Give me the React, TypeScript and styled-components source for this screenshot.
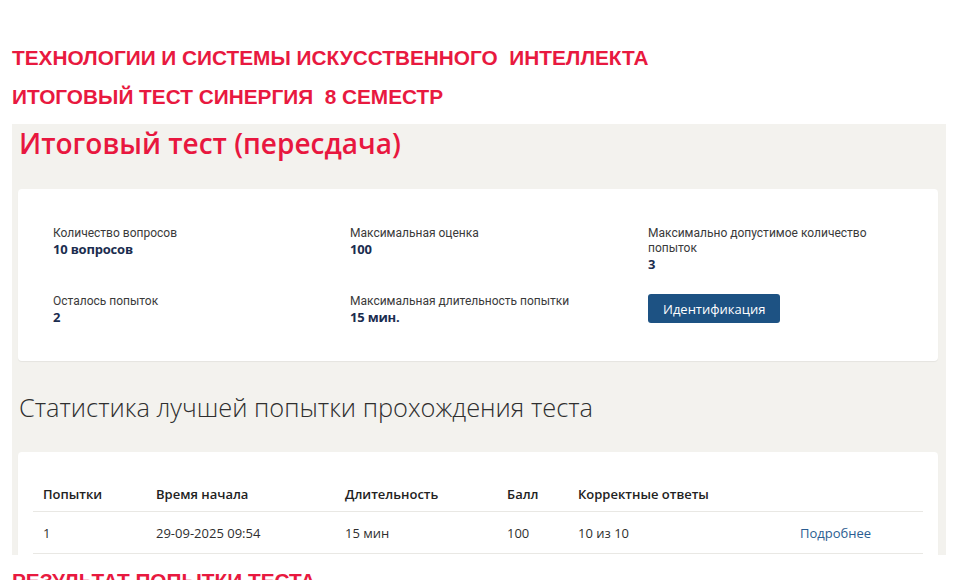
import React from "react";
import styled, { createGlobalStyle } from "styled-components";

const Global = createGlobalStyle`
  html, body {
    margin: 0;
    padding: 0;
    background: #ffffff;
    height: 580px;
    overflow: hidden;
  }
  body {
    font-family: "Open Sans", "Liberation Sans", sans-serif;
  }
`;

const Page = styled.div`
  padding-top: 38px;
  display: flex;
  flex-direction: column;
`;

const RedHeading = styled.div`
  flex-shrink: 0;
  font-family: "Liberation Sans", Arial, sans-serif;
  font-weight: 700;
  font-size: 20.8px;
  line-height: 39px;
  color: #e8193f;
  padding-left: 12px;
  white-space: pre;
`;

const Panel = styled.section`
  flex-shrink: 0;
  margin: 8px 0 6px 12px;
  width: 934px;
  height: 431px;
  box-sizing: border-box;
  background: #f3f2ee;
  padding: 0 8px 0 6px;
  overflow: hidden;
  display: flex;
  flex-direction: column;
  & > * {
    flex-shrink: 0;
  }
`;

const Title = styled.h1`
  margin: 0;
  padding: 0 0 0 1px;
  font-family: "Open Sans", sans-serif;
  font-weight: 600;
  font-size: 28px;
  line-height: 38px;
  color: #e8173f;
  height: 65px;
`;

const Card = styled.div`
  background: #ffffff;
  border-radius: 4px;
  box-shadow: 0 1px 1px rgba(0, 0, 0, 0.06);
`;

const InfoCard = styled(Card)`
  padding: 37px 20px 36px 35px;
  display: grid;
  grid-template-columns: 297px 298px 1fr;
  row-gap: 22px;
`;

const InfoItem = styled.div`
  display: flex;
  flex-direction: column;
  align-items: flex-start;
`;

const Label = styled.div`
  font-family: Roboto, "Open Sans", sans-serif;
  font-size: 12px;
  line-height: 15px;
  color: #3a3a3a;
  max-width: 225px;
`;

const Value = styled.div`
  font-size: 13px;
  line-height: 16px;
  font-weight: 700;
  color: #1b2d4f;
  letter-spacing: -0.2px;
`;

const Button = styled.button`
  height: 29px;
  padding: 0 15px;
  border: none;
  border-radius: 3px;
  background: #1d5283;
  color: #ffffff;
  font-family: "Open Sans", sans-serif;
  font-size: 13px;
  cursor: pointer;
`;

const SubTitle = styled.h2`
  margin: 30px 0 0 0;
  padding: 0 0 0 1px;
  font-family: "Open Sans", sans-serif;
  font-weight: 300;
  font-size: 25.4px;
  line-height: 32px;
  color: #2f2f2f;
  height: 61px;
`;

const TableCard = styled(Card)`
  padding: 24px 15px 0 15px;
  height: 200px;
`;

const Table = styled.table`
  width: 100%;
  border-collapse: collapse;
  table-layout: fixed;
  font-size: 13px;
  color: #2f2f2f;
`;

const Th = styled.th`
  text-align: left;
  font-weight: 600;
  padding: 0 0 0 10px;
  height: 35px;
  border-bottom: 1px solid #e9e8e4;
  color: #222;
`;

const Td = styled.td`
  text-align: left;
  padding: 0 0 0 10px;
  height: 41px;
  border-bottom: 1px solid #e9e8e4;
`;

const Link = styled.a`
  color: #2b5d91;
  text-decoration: none;
`;

const info = [
  { label: "Количество вопросов", value: "10 вопросов" },
  { label: "Максимальная оценка", value: "100" },
  { label: "Максимально допустимое количество попыток", value: "3" },
  { label: "Осталось попыток", value: "2" },
  { label: "Максимальная длительность попытки", value: "15 мин." },
];

export default function App() {
  return (
    <>
      <Global />
      <Page>
        <RedHeading>{"ТЕХНОЛОГИИ И СИСТЕМЫ ИСКУССТВЕННОГО  ИНТЕЛЛЕКТА"}</RedHeading>
        <RedHeading>{"ИТОГОВЫЙ ТЕСТ СИНЕРГИЯ  8 СЕМЕСТР"}</RedHeading>
        <Panel>
          <Title>Итоговый тест (пересдача)</Title>
          <InfoCard>
            {info.map((i) => (
              <InfoItem key={i.label}>
                <Label>{i.label}</Label>
                <Value>{i.value}</Value>
              </InfoItem>
            ))}
            <InfoItem>
              <Button>Идентификация</Button>
            </InfoItem>
          </InfoCard>
          <SubTitle>Статистика лучшей попытки прохождения теста</SubTitle>
          <TableCard>
            <Table>
              <colgroup>
                <col style={{ width: 113 }} />
                <col style={{ width: 189 }} />
                <col style={{ width: 162 }} />
                <col style={{ width: 71 }} />
                <col style={{ width: 222 }} />
                <col />
              </colgroup>
              <thead>
                <tr>
                  <Th>Попытки</Th>
                  <Th>Время начала</Th>
                  <Th>Длительность</Th>
                  <Th>Балл</Th>
                  <Th>Корректные ответы</Th>
                  <Th />
                </tr>
              </thead>
              <tbody>
                <tr>
                  <Td>1</Td>
                  <Td>29-09-2025 09:54</Td>
                  <Td>15 мин</Td>
                  <Td>100</Td>
                  <Td>10 из 10</Td>
                  <Td>
                    <Link href="#">Подробнее</Link>
                  </Td>
                </tr>
              </tbody>
            </Table>
          </TableCard>
        </Panel>
        <RedHeading>{"РЕЗУЛЬТАТ ПОПЫТКИ ТЕСТА"}</RedHeading>
      </Page>
    </>
  );
}
